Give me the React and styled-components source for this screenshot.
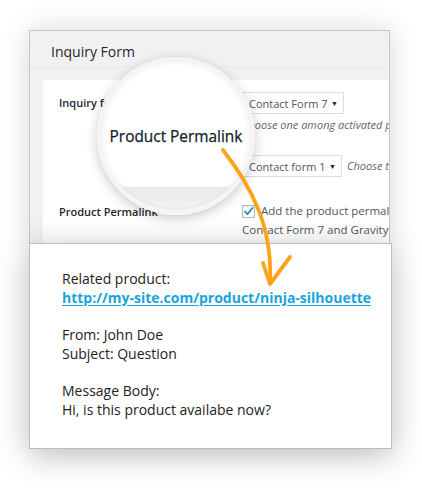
import React from 'react';
import styled, { createGlobalStyle } from 'styled-components';

const Global = createGlobalStyle`
  html, body {
    margin: 0;
    padding: 0;
    background: #fff;
  }
  body {
    font-family: 'Open Sans', 'Liberation Sans', sans-serif;
  }
`;

const Stage = styled.div`
  position: relative;
  width: 422px;
  height: 488px;
  padding: 30px 0 0 29px;
  box-sizing: border-box;
  overflow: hidden;
`;

const BackPanel = styled.div`
  width: 361px;
  height: 213px;
  box-sizing: border-box;
  border: 1px solid #c6c6c6;
  border-bottom: none;
  background: #f1f1f1;
  box-shadow: 0 0 26px rgba(0, 0, 0, 0.16);
  overflow: hidden;
`;

const Header = styled.div`
  height: 37px;
  padding: 4px 0 0 21px;
  box-sizing: border-box;
  display: flex;
  align-items: center;
  border-bottom: 1px solid #e8e8e8;
  font-size: 14px;
  color: #23282d;
`;

const Body = styled.div`
  margin: 12px 0 0 13px;
  height: 200px;
  background: #fff;
  padding: 12px 0 0 16px;
  box-sizing: border-box;
  overflow: hidden;
`;

const Row = styled.div`
  display: grid;
  grid-template-columns: 183px 1fr;
  margin-top: ${p => p.$gap || 0}px;
`;

const Label = styled.div`
  font-size: 11px;
  font-weight: 600;
  color: #23282d;
  line-height: ${p => p.$lh || 22}px;
  margin-top: ${p => p.$top || 0}px;
  white-space: nowrap;
`;

const Field = styled.div`
  display: flex;
  flex-direction: ${p => (p.$inline ? 'row' : 'column')};
  align-items: ${p => (p.$inline ? 'center' : 'flex-start')};
  gap: ${p => (p.$inline ? 5 : 3)}px;
  white-space: nowrap;
  min-width: 0;
`;

const Select = styled.div`
  width: ${p => p.$w}px;
  height: 22px;
  box-sizing: border-box;
  border: 1px solid #ddd;
  padding: 0 5px 0 6px;
  display: flex;
  align-items: center;
  justify-content: space-between;
  font-size: 11px;
  color: #555;
  flex-shrink: 0;
`;

const Caret = styled.span`
  font-size: 7px;
  color: #222;
`;

const Hint = styled.div`
  font-size: 11px;
  font-style: italic;
  color: #666;
  line-height: 16px;
`;

const CheckLine = styled.div`
  font-size: 11.5px;
  color: #555;
  line-height: 16px;
  display: flex;
  align-items: flex-start;
  gap: 6px;
`;

const Checkbox = styled.span`
  width: 13px;
  height: 13px;
  margin-top: 2px;
  box-sizing: border-box;
  border: 1px solid #b4b9be;
  background: #fff;
  box-shadow: inset 0 1px 2px rgba(0, 0, 0, 0.1);
  display: flex;
  align-items: center;
  justify-content: center;
  flex-shrink: 0;
`;

const FrontPanel = styled.div`
  position: relative;
  width: 363px;
  height: 206px;
  box-sizing: border-box;
  background: #fff;
  border: 1px solid #bdbdbd;
  box-shadow: 0 6px 30px rgba(0, 0, 0, 0.28);
  padding: 26px 0 26px 32px;
  font-size: 14px;
  line-height: 18.7px;
  color: #222;
`;

const Para = styled.p`
  margin: 0 0 18.7px;
  white-space: nowrap;
`;

const Link = styled.a`
  color: #1aa3dd;
  font-weight: 700;
  text-decoration: underline;
  text-underline-offset: 2px;
`;

const Magnifier = styled.div`
  position: absolute;
  left: 97px;
  top: 57px;
  width: 158px;
  height: 158px;
  box-sizing: border-box;
  border-radius: 50%;
  border: 5px solid #f4f4f4;
  background: linear-gradient(to bottom, #fff 0%, #fff 84%, #ebebeb 84.5%, #f3f3f3 100%);
  box-shadow: 0 3px 12px rgba(0, 0, 0, 0.22), inset 0 0 5px rgba(0, 0, 0, 0.08);
  display: flex;
  align-items: center;
  justify-content: center;
  font-size: 15.4px;
  font-weight: 400;
  color: #14202d;
  -webkit-text-stroke: 0.25px #14202d;
`;

const ArrowLayer = styled.svg`
  position: absolute;
  left: 0;
  top: 0;
  pointer-events: none;
`;

export default function App() {
  return (
    <>
      <Global />
      <Stage>
        <BackPanel>
          <Header>Inquiry Form</Header>
          <Body>
            <Row>
              <Label>Inquiry form</Label>
              <Field>
                <Select $w={102}>
                  Contact Form 7 <Caret>▼</Caret>
                </Select>
                <Hint>Choose one among activated plugins</Hint>
              </Field>
            </Row>
            <Row $gap={22}>
              <Label />
              <Field $inline>
                <Select $w={100}>
                  Contact form 1 <Caret>▼</Caret>
                </Select>
                <Hint>Choose the form</Hint>
              </Field>
            </Row>
            <Row $gap={26}>
              <Label $lh={16} $top={1}>Product Permalink</Label>
              <Field>
                <CheckLine>
                  <Checkbox>
                    <svg width="11" height="11" viewBox="0 0 11 11">
                      <path d="M2 5.6 L4.4 8.2 L9.4 2" fill="none" stroke="#1e8cbe" strokeWidth="1.8" strokeLinecap="round" strokeLinejoin="round" />
                    </svg>
                  </Checkbox>
                  Add the product permalink to the message of
                </CheckLine>
                <CheckLine>Contact Form 7 and Gravity Forms</CheckLine>
              </Field>
            </Row>
          </Body>
        </BackPanel>

        <Magnifier>Product Permalink</Magnifier>

        <FrontPanel>
          <Para>
            Related product:
            <br />
            <Link href="#">http://my-site.com/product/ninja-silhouette</Link>
          </Para>
          <Para>
            From: John Doe
            <br />
            Subject: Question
          </Para>
          <Para>
            Message Body:
            <br />
            Hi, is this product availabe now?
          </Para>
        </FrontPanel>

        <ArrowLayer width="422" height="488" viewBox="0 0 422 488">
          <path d="M223 150 C250 185 273 225 270 283" fill="none" stroke="#ffa31a" strokeWidth="3.8" strokeLinecap="round" />
          <path d="M263 263 L270 284 L290 257" fill="none" stroke="#ffa31a" strokeWidth="3.8" strokeLinecap="round" strokeLinejoin="round" />
        </ArrowLayer>
      </Stage>
    </>
  );
}
